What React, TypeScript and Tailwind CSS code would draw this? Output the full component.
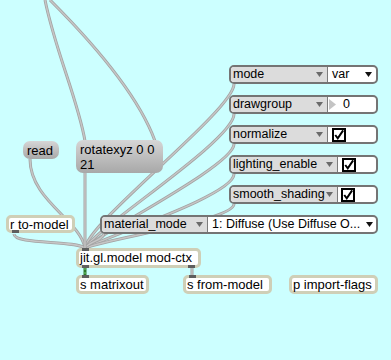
import type { ReactNode } from 'react';

const FONT = "font-['Liberation_Sans',Arial,sans-serif]";

// patch cords
const CORDS: string[] = [
  'M45,0 C55,50 78,100 85,141',
  'M50,0 C100,50 140,100 155,141',
  'M234,84 C234,110 90,220 85,248',
  'M234,114 C234,140 100,225 85,248',
  'M234,144 C234,165 105,230 85,248',
  'M234,174 C234,195 110,235 85,248',
  'M234,204 C234,220 110,238 85,248',
  'M104,233 C104,240 88,242 85,248',
  'M30,159 C30,200 80,220 85,248',
  'M14,234 C14,245 75,240 85,248',
  'M85,173 L85,248',
  'M192,268 L192,276',
];

function Arrow({ color }: { color: string }) {
  return (
    <svg width="7" height="5" viewBox="0 0 7 5" className="shrink-0">
      <polygon points="0,0 7,0 3.5,5" fill={color} />
    </svg>
  );
}

function Check() {
  return (
    <div className="flex h-[14px] w-[14px] items-center justify-center border-2 border-black bg-white">
      <svg width="12" height="12" viewBox="0 0 12 12">
        <path d="M1.5,6 L4.5,10 L11,0.5" fill="none" stroke="black" strokeWidth="2.4" />
      </svg>
    </div>
  );
}

function AttrUI({ pos, split, label, children }: { pos: string; split: string; label: string; children: ReactNode }) {
  return (
    <div className={`absolute flex h-[19px] overflow-hidden rounded-[5px] border-2 border-[#747474] bg-white text-[12.5px] leading-[15px] text-black ${pos}`}>
      <div className={`flex shrink-0 items-center justify-between border-r border-[#7c7c7c] bg-[#dcdcdc] pl-[2px] pr-[4px] ${split}`}>
        <span className="whitespace-nowrap">{label}</span>
        <Arrow color="#6a6a6a" />
      </div>
      <div className="flex min-w-0 flex-1 items-center">{children}</div>
    </div>
  );
}

function Msg({ pos, children }: { pos: string; children: ReactNode }) {
  return (
    <div className={`absolute rounded-[7px] bg-linear-to-b from-[#d6d6d6] to-[#a8a8a8] pl-[4px] pt-[2px] text-[13px] leading-[15px] text-black ${pos}`}>
      {children}
    </div>
  );
}

function Obj({ pos, text, inlet = false, outlets = [] }: { pos: string; text: string; inlet?: boolean; outlets?: string[] }) {
  return (
    <div className={`absolute rounded-[5px] border-[3px] border-[#cfcfb7] bg-white pl-[1px] text-[13px] leading-[14px] text-black whitespace-nowrap ${pos}`}>
      {inlet && <div className="absolute -top-[3px] left-[3px] h-[3px] w-[7px] bg-[#5e5e5e]" />}
      {outlets.map((o) => (
        <div key={o} className={`absolute -bottom-[3px] h-[3px] w-[7px] bg-[#5e5e5e] ${o}`} />
      ))}
      {text}
    </div>
  );
}

export default function App() {
  return (
    <div className={`relative h-[360px] w-[391px] overflow-hidden bg-[#ccffff] ${FONT}`}>
      <svg className="absolute inset-0" width="391" height="360">
        {CORDS.map((d) => (
          <g key={d}>
            <path d={d} fill="none" stroke="#a3a3a3" strokeWidth="3" />
            <path d={d} fill="none" stroke="#c6c6c6" strokeWidth="1.4" />
          </g>
        ))}
        <path d="M85,268 L85,276" stroke="#2f7a2f" strokeWidth="3" />
        <path d="M85,268 L85,276" stroke="#6fcf6f" strokeWidth="1" strokeDasharray="2 2" />
      </svg>

      <AttrUI pos="left-[229px] top-[65px] w-[149px]" split="w-[97px]" label="mode">
        <span className="flex-1 pl-[4px]">var</span>
        <span className="pr-[4px]"><Arrow color="#111" /></span>
      </AttrUI>
      <AttrUI pos="left-[229px] top-[95px] w-[149px]" split="w-[97px]" label="drawgroup">
        <svg width="8" height="11" viewBox="0 0 8 11" className="ml-[1px] shrink-0">
          <polygon points="0,0 7,5.5 0,11" fill="#c4c4c4" />
        </svg>
        <span className="pl-[6px]">0</span>
      </AttrUI>
      <AttrUI pos="left-[229px] top-[125px] w-[149px]" split="w-[97px]" label="normalize">
        <span className="pl-[4px]"><Check /></span>
      </AttrUI>
      <AttrUI pos="left-[229px] top-[155px] w-[149px]" split="w-[107px]" label="lighting_enable">
        <span className="pl-[4px]"><Check /></span>
      </AttrUI>
      <AttrUI pos="left-[229px] top-[185px] w-[149px]" split="w-[107px]" label="smooth_shading">
        <span className="pl-[3px]"><Check /></span>
      </AttrUI>
      <AttrUI pos="left-[100px] top-[215px] w-[278px]" split="w-[106px]" label="material_mode">
        <span className="flex-1 truncate pl-[4px]">1: Diffuse (Use Diffuse O...</span>
        <span className="pr-[3px]"><Arrow color="#111" /></span>
      </AttrUI>

      <Msg pos="left-[23px] top-[141px] h-[18px] w-[36px]">read</Msg>
      <Msg pos="left-[76px] top-[140px] h-[33px] w-[87px]">
        rotatexyz 0 0
        <br />
        21
      </Msg>

      <Obj pos="left-[6px] top-[215px] h-[18px] w-[69px]" text="r to-model" outlets={['left-[3px]']} />
      <Obj pos="left-[76px] top-[248px] h-[20px] w-[125px]" text="jit.gl.model mod-ctx" inlet outlets={['left-[3px]', 'right-[3px]']} />
      <Obj pos="left-[76px] top-[275px] h-[19px] w-[73px]" text="s matrixout" inlet />
      <Obj pos="left-[183px] top-[275px] h-[19px] w-[89px]" text="s from-model" inlet />
      <Obj pos="left-[289px] top-[275px] h-[19px] w-[89px]" text="p import-flags" />
    </div>
  );
}
